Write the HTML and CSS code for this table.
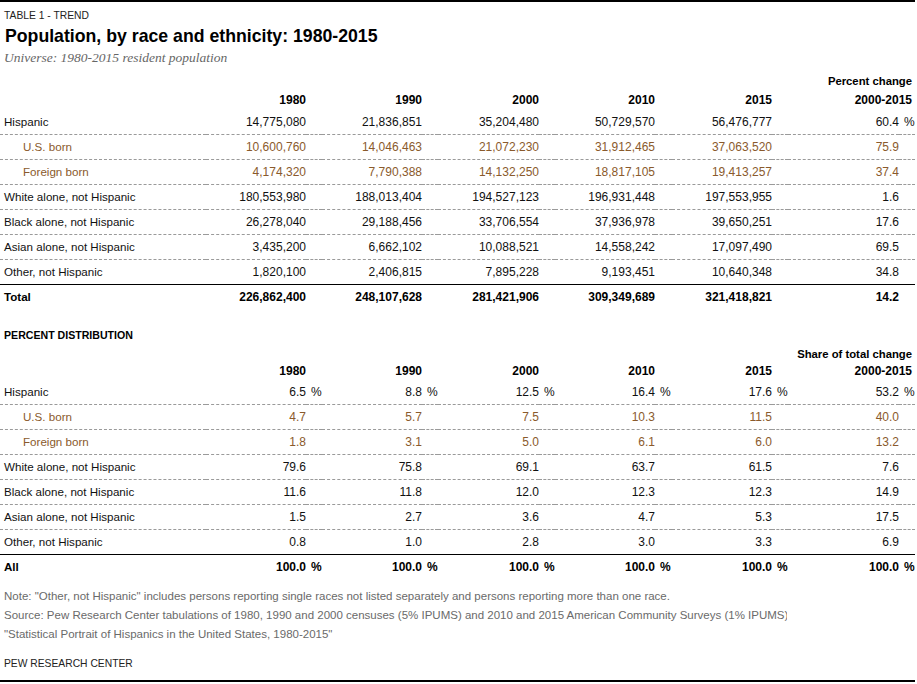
FILE: index.html
```html
<!DOCTYPE html>
<html lang="en">
<head>
<meta charset="utf-8">
<title>Population, by race and ethnicity: 1980-2015</title>
<link rel="stylesheet" href="styles.css">
</head>
<body>
<div class="chart">
  <div class="kicker">TABLE 1 - TREND</div>
  <h1 class="title">Population, by race and ethnicity: 1980-2015</h1>
  <div class="subtitle">Universe: 1980-2015 resident population</div>

  <table class="data first">
    <colgroup>
      <col class="c-label"><col class="c-v"><col class="c-s"><col class="c-v"><col class="c-s"><col class="c-v3"><col class="c-s"><col class="c-v"><col class="c-s4"><col class="c-v"><col class="c-s"><col class="c-v6"><col class="c-s">
    </colgroup>
    <thead>
      <tr class="head">
        <th></th>
        <th class="num">1980</th><th></th>
        <th class="num">1990</th><th></th>
        <th class="num">2000</th><th></th>
        <th class="num">2010</th><th></th>
        <th class="num">2015</th><th></th>
        <th class="num last" colspan="2"><span class="cap">Percent change</span><br>2000-2015</th>
      </tr>
    </thead>
    <tbody>
      <tr><td class="lab">Hispanic</td><td class="num">14,775,080</td><td></td><td class="num">21,836,851</td><td></td><td class="num">35,204,480</td><td></td><td class="num">50,729,570</td><td></td><td class="num">56,476,777</td><td></td><td class="num">60.4</td><td class="sfx">%</td></tr>
      <tr class="sub"><td class="lab">U.S. born</td><td class="num">10,600,760</td><td></td><td class="num">14,046,463</td><td></td><td class="num">21,072,230</td><td></td><td class="num">31,912,465</td><td></td><td class="num">37,063,520</td><td></td><td class="num">75.9</td><td></td></tr>
      <tr class="sub"><td class="lab">Foreign born</td><td class="num">4,174,320</td><td></td><td class="num">7,790,388</td><td></td><td class="num">14,132,250</td><td></td><td class="num">18,817,105</td><td></td><td class="num">19,413,257</td><td></td><td class="num">37.4</td><td></td></tr>
      <tr><td class="lab">White alone, not Hispanic</td><td class="num">180,553,980</td><td></td><td class="num">188,013,404</td><td></td><td class="num">194,527,123</td><td></td><td class="num">196,931,448</td><td></td><td class="num">197,553,955</td><td></td><td class="num">1.6</td><td></td></tr>
      <tr><td class="lab">Black alone, not Hispanic</td><td class="num">26,278,040</td><td></td><td class="num">29,188,456</td><td></td><td class="num">33,706,554</td><td></td><td class="num">37,936,978</td><td></td><td class="num">39,650,251</td><td></td><td class="num">17.6</td><td></td></tr>
      <tr><td class="lab">Asian alone, not Hispanic</td><td class="num">3,435,200</td><td></td><td class="num">6,662,102</td><td></td><td class="num">10,088,521</td><td></td><td class="num">14,558,242</td><td></td><td class="num">17,097,490</td><td></td><td class="num">69.5</td><td></td></tr>
      <tr class="pre-total"><td class="lab">Other, not Hispanic</td><td class="num">1,820,100</td><td></td><td class="num">2,406,815</td><td></td><td class="num">7,895,228</td><td></td><td class="num">9,193,451</td><td></td><td class="num">10,640,348</td><td></td><td class="num">34.8</td><td></td></tr>
      <tr class="total"><td class="lab">Total</td><td class="num">226,862,400</td><td></td><td class="num">248,107,628</td><td></td><td class="num">281,421,906</td><td></td><td class="num">309,349,689</td><td></td><td class="num">321,418,821</td><td></td><td class="num">14.2</td><td></td></tr>
    </tbody>
  </table>

  <div class="section">PERCENT DISTRIBUTION</div>

  <table class="data second">
    <colgroup>
      <col class="c-label"><col class="c-v"><col class="c-s"><col class="c-v"><col class="c-s"><col class="c-v3"><col class="c-s"><col class="c-v"><col class="c-s4"><col class="c-v"><col class="c-s"><col class="c-v6"><col class="c-s">
    </colgroup>
    <thead>
      <tr class="head">
        <th></th>
        <th class="num">1980</th><th></th>
        <th class="num">1990</th><th></th>
        <th class="num">2000</th><th></th>
        <th class="num">2010</th><th></th>
        <th class="num">2015</th><th></th>
        <th class="num last" colspan="2"><span class="cap">Share of total change</span><br>2000-2015</th>
      </tr>
    </thead>
    <tbody>
      <tr><td class="lab">Hispanic</td><td class="num">6.5</td><td class="sfx">%</td><td class="num">8.8</td><td class="sfx">%</td><td class="num">12.5</td><td class="sfx">%</td><td class="num">16.4</td><td class="sfx">%</td><td class="num">17.6</td><td class="sfx">%</td><td class="num">53.2</td><td class="sfx">%</td></tr>
      <tr class="sub"><td class="lab">U.S. born</td><td class="num">4.7</td><td></td><td class="num">5.7</td><td></td><td class="num">7.5</td><td></td><td class="num">10.3</td><td></td><td class="num">11.5</td><td></td><td class="num">40.0</td><td></td></tr>
      <tr class="sub"><td class="lab">Foreign born</td><td class="num">1.8</td><td></td><td class="num">3.1</td><td></td><td class="num">5.0</td><td></td><td class="num">6.1</td><td></td><td class="num">6.0</td><td></td><td class="num">13.2</td><td></td></tr>
      <tr><td class="lab">White alone, not Hispanic</td><td class="num">79.6</td><td></td><td class="num">75.8</td><td></td><td class="num">69.1</td><td></td><td class="num">63.7</td><td></td><td class="num">61.5</td><td></td><td class="num">7.6</td><td></td></tr>
      <tr><td class="lab">Black alone, not Hispanic</td><td class="num">11.6</td><td></td><td class="num">11.8</td><td></td><td class="num">12.0</td><td></td><td class="num">12.3</td><td></td><td class="num">12.3</td><td></td><td class="num">14.9</td><td></td></tr>
      <tr><td class="lab">Asian alone, not Hispanic</td><td class="num">1.5</td><td></td><td class="num">2.7</td><td></td><td class="num">3.6</td><td></td><td class="num">4.7</td><td></td><td class="num">5.3</td><td></td><td class="num">17.5</td><td></td></tr>
      <tr class="pre-total"><td class="lab">Other, not Hispanic</td><td class="num">0.8</td><td></td><td class="num">1.0</td><td></td><td class="num">2.8</td><td></td><td class="num">3.0</td><td></td><td class="num">3.3</td><td></td><td class="num">6.9</td><td></td></tr>
      <tr class="total"><td class="lab">All</td><td class="num">100.0</td><td class="sfx">%</td><td class="num">100.0</td><td class="sfx">%</td><td class="num">100.0</td><td class="sfx">%</td><td class="num">100.0</td><td class="sfx">%</td><td class="num">100.0</td><td class="sfx">%</td><td class="num">100.0</td><td class="sfx">%</td></tr>
    </tbody>
  </table>

  <div class="notes">
    <p>Note: "Other, not Hispanic" includes persons reporting single races not listed separately and persons reporting more than one race.</p>
    <p class="clip">Source: Pew Research Center tabulations of 1980, 1990 and 2000 censuses (5% IPUMS) and 2010 and 2015 American Community Surveys (1% IPUMS)</p>
    <p>"Statistical Portrait of Hispanics in the United States, 1980-2015"</p>
  </div>

  <div class="credit">PEW RESEARCH CENTER</div>
</div>
</body>
</html>
```

FILE: styles.css
```css
html, body {
  margin: 0;
  padding: 0;
  background: #fff;
}

body {
  font-family: "Liberation Sans", Arial, sans-serif;
  color: #111;
}

.chart {
  width: 915px;
  border-top: 2px solid #000;
  border-bottom: 2px solid #000;
  padding-bottom: 7px;
}

.kicker {
  font-size: 10.3px;
  line-height: 14px;
  padding: 7px 0 0 4px;
  color: #222;
}

.title {
  margin: 1px 0 0;
  padding-left: 5px;
  font-size: 17.7px;
  line-height: 24px;
  font-weight: bold;
  color: #000;
}

.subtitle {
  margin-top: 1px;
  padding-left: 4px;
  font-family: "Liberation Serif", "DejaVu Serif", serif;
  font-style: italic;
  font-size: 13.5px;
  line-height: 18px;
  color: #666;
}

.data {
  width: 915px;
  table-layout: fixed;
  border-collapse: separate;
  border-spacing: 0;
  font-size: 12px;
}

.data.first {
  margin-top: 5px;
}

.c-label { width: 206px; }
.c-v { width: 100px; }
.c-v3 { width: 101px; }
.c-v6 { width: 111px; }
.c-s { width: 16px; }
.c-s4 { width: 17px; }

.data th {
  font-weight: bold;
  line-height: 19px;
  padding: 0;
  vertical-align: bottom;
  color: #000;
}

.data.second th {
  line-height: 17px;
}

.data .head th.last {
  text-align: right;
  padding-right: 3px;
}

.data .head .cap {
  font-size: 11.3px;
}

.data td {
  height: 24px;
  padding: 0;
  border-bottom: 1px dashed #9a9a9a;
  line-height: 14px;
  white-space: nowrap;
}

.data .num {
  text-align: right;
}

.data .lab {
  padding-left: 4px;
  font-size: 11.6px;
}

.data .sfx {
  text-align: left;
  padding-left: 5px;
}

.data .sub td {
  color: #8a5a2c;
}

.data .sub .lab {
  padding-left: 23px;
}

.data .pre-total td {
  border-bottom: 1px solid #000;
}

.data .total td {
  font-weight: bold;
  border-bottom: none;
  color: #000;
}

.section {
  margin-top: 19px;
  padding-left: 4px;
  font-size: 10.6px;
  font-weight: bold;
  line-height: 14px;
  color: #000;
}

.data.second {
  margin-top: 4px;
}

.notes {
  margin-top: 8px;
  padding-left: 4px;
  font-size: 11.5px;
  line-height: 19px;
  color: #6a6a6a;
}

.notes p {
  margin: 0;
  white-space: nowrap;
}

.notes .clip {
  width: 783px;
  overflow: hidden;
}

.credit {
  margin-top: 10px;
  padding-left: 4px;
  font-size: 10.3px;
  line-height: 19px;
  color: #222;
}
```
